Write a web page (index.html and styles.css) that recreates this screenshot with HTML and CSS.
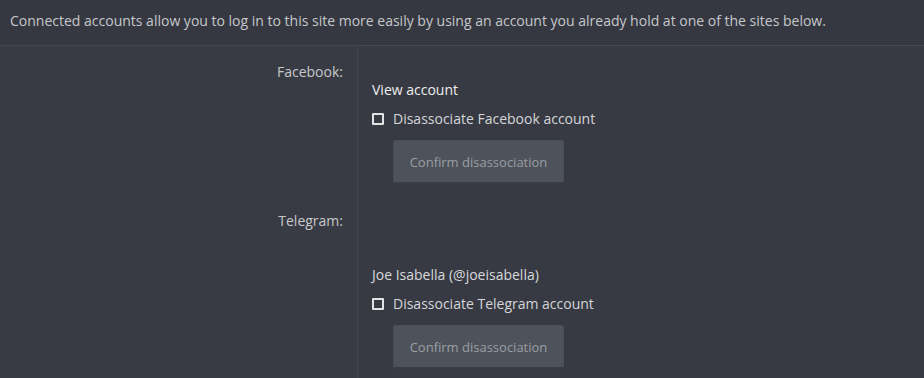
FILE: index.html
```html
<!DOCTYPE html>
<html>
<head>
<meta charset="utf-8">
<link rel="stylesheet" href="styles.css">
</head>
<body>
<div class="block">
  <div class="explain">Connected accounts allow you to log in to this site more easily by using an account you already hold at one of the sites below.</div>
  <div class="form">
    <div class="row row-fb">
      <div class="label">Facebook:</div>
      <div class="input">
        <a class="view" href="#">View account</a>
        <label class="choice"><span class="box"></span>Disassociate Facebook account</label>
        <button class="btn" type="button">Confirm disassociation</button>
      </div>
    </div>
    <div class="row row-tg">
      <div class="label">Telegram:</div>
      <div class="input">
        <div class="name">Joe Isabella (@joeisabella)</div>
        <label class="choice"><span class="box"></span>Disassociate Telegram account</label>
        <button class="btn" type="button">Confirm disassociation</button>
      </div>
    </div>
  </div>
</div>
</body>
</html>
```

FILE: styles.css
```css
html, body {
  margin: 0;
  padding: 0;
  background: #373a42;
}
body {
  font-family: "Open Sans", "Noto Sans", sans-serif;
  font-size: 14px;
  color: #c9cbcf;
  height: 378px;
  overflow: hidden;
}
.block {
  background: #373a42;
}
.explain {
  background: #353840;
  padding: 10px 10px 14px 10px;
  line-height: 21px;
  color: #c5c7cb;
  border-bottom: 1px solid #44474e;
  font-size: 14px;
}
.form {
  display: grid;
  grid-template-columns: 358px 1fr;
}
.row {
  display: contents;
}
.label {
  text-align: right;
  padding-right: 14px;
  line-height: 20px;
  color: #c6c8cc;
  background: #383b43;
  border-right: 1px solid #42454c;
}
.row-fb .label { padding-top: 16px; }
.row-tg .label { padding-top: 9px; }
.input {
  padding-left: 14px;
  display: flex;
  flex-direction: column;
  align-items: flex-start;
}
.row-fb .input { padding-top: 34px; padding-bottom: 18px; }
.row-tg .input { padding-top: 63px; }
.view {
  color: #eeeeee;
  text-decoration: none;
  line-height: 20px;
}
.name {
  color: #d8d9dc;
  line-height: 20px;
}
.choice {
  display: flex;
  align-items: center;
  margin-top: 9px;
  line-height: 20px;
  color: #d4d6d9;
}
.box {
  width: 8px;
  height: 8px;
  border: 2px solid #e2e3e5;
  border-radius: 1px;
  margin-right: 9px;
}
.btn {
  margin: 11px 0 0 21px;
  width: 171px;
  height: 44px;
  background: #4e525a;
  border: 1px solid #4a4e56;
  border-bottom: 2px solid #3a3d44;
  border-radius: 3px;
  color: #9a9ea5;
  font-family: inherit;
  font-size: 13px;
  padding: 0;
}
.row-tg .btn { margin-bottom: 20px; }
```
